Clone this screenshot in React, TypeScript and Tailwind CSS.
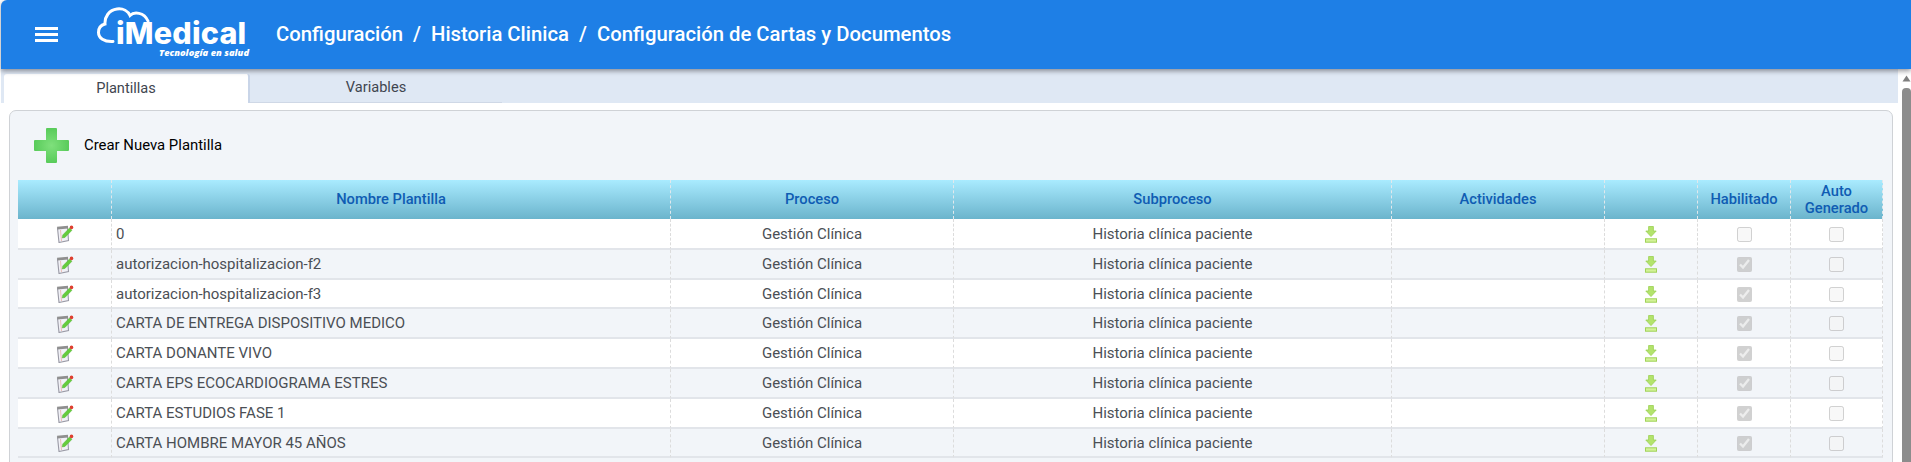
import React from "react";

const rows: [string, boolean, string][] = [
  ["0", false, "h-[31px]"],
  ["autorizacion-hospitalizacion-f2", true, "h-[30px]"],
  ["autorizacion-hospitalizacion-f3", true, "h-[29px]"],
  ["CARTA DE ENTREGA DISPOSITIVO MEDICO", true, "h-[30px]"],
  ["CARTA DONANTE VIVO", true, "h-[30px]"],
  ["CARTA EPS ECOCARDIOGRAMA ESTRES", true, "h-[30px]"],
  ["CARTA ESTUDIOS FASE 1", true, "h-[30px]"],
  ["CARTA HOMBRE MAYOR 45 AÑOS", true, "h-[29px]"],
];

function EditIcon() {
  return (
    <svg width="18" height="18" viewBox="0 0 18 18" className="block">
      <path d="M1.5 3 L11.5 2 L12.5 15.5 L3 17.5 Z" fill="#f1f1f7" stroke="#9a9aa6" strokeWidth="1.1" />
      <path d="M1 1.8 L12 0.8 L12 3.6 L1.5 4.6 Z" fill="#8f8f8f" />
      <path d="M4.5 5 L5.5 16" stroke="#e8b0a6" strokeWidth="0.8" />
      <path d="M6.2 13 L6.7 10 L13.5 3 L16 5.3 L9 12.4 Z" fill="#66cc3c" stroke="#4aa82a" strokeWidth="0.4" />
      <circle cx="15.5" cy="2.4" r="1.8" fill="#de3f30" />
    </svg>
  );
}

function DownloadIcon() {
  return (
    <svg width="12" height="17" viewBox="0 0 12 17" className="block">
      <path d="M3.6 0.5 H8.4 V5 H11.2 L6 10.6 L0.8 5 H3.6 Z" fill="#b3e36c" stroke="#9ad052" strokeWidth="0.8" />
      <rect x="0.5" y="12.8" width="11" height="3.4" fill="#d3f298" stroke="#a0d258" strokeWidth="1" />
    </svg>
  );
}

function PlusIcon() {
  return (
    <svg width="37" height="37" viewBox="0 0 37 37" className="block" style={{ filter: "blur(0.7px)" }}>
      <defs>
        <radialGradient id="plusGrad" cx="50%" cy="50%" r="55%">
          <stop offset="0%" stopColor="#7fe07c" />
          <stop offset="100%" stopColor="#55c957" />
        </radialGradient>
      </defs>
      <path
        d="M13 2 Q13 1 14 1 H23 Q24 1 24 2 V13 H35 Q36 13 36 14 V23 Q36 24 35 24 H24 V35 Q24 36 23 36 H14 Q13 36 13 35 V24 H2 Q1 24 1 23 V14 Q1 13 2 13 H13 Z"
        fill="url(#plusGrad)"
      />
    </svg>
  );
}

function Logo() {
  return (
    <div className="relative w-[152px] h-[52px] ml-[38px] mt-[7px] shrink-0 text-white">
      <svg width="60" height="42" viewBox="0 0 60 42" className="absolute left-0 top-0">
        <path
          d="M17 34.5 C8 35 2.5 31 2.5 25.5 C2.5 21 5 18 9 17 C8.5 10 13 3 21 2 C27 1.2 32 4 34 8.5 C38 4.5 48 5 52 14"
          fill="none"
          stroke="#fff"
          strokeWidth="3"
          strokeLinecap="round"
        />
      </svg>
      <div className="absolute left-[20px] top-[12px] font-['Inter',sans-serif] font-extrabold text-[30.5px] leading-[28px] tracking-[0.2px] whitespace-nowrap">
        iMedical
      </div>
      <div className="absolute left-[63px] top-[41px] font-['Open_Sans',sans-serif] font-extrabold italic text-[9.3px] leading-[10px] whitespace-nowrap">
        Tecnología en salud
      </div>
    </div>
  );
}

function Th({ children }: { children?: React.ReactNode }) {
  return (
    <th className="p-0 text-center align-middle font-medium text-[14.7px] leading-[17px] text-[#0f5cb3] border-r border-r-[#e2e8ec] [border-right-style:dashed]">
      {children}
    </th>
  );
}

const cell = "p-0 pt-[1px] border-r border-r-[#dcdcdc] [border-right-style:dashed] border-b-2 border-b-[#e2e5ea] align-middle";

export default function App() {
  return (
    <div className="h-[462px] w-[1911px] overflow-hidden bg-white font-['Roboto',sans-serif] flex flex-col">
      <header className="relative z-10 h-[69px] shrink-0 ml-px bg-[#1e7fe6] rounded-tl-md flex items-start shadow-[0_2px_5px_rgba(60,60,70,0.55)]">
        <button className="ml-[34px] mt-[27px] w-[23px] flex flex-col gap-[3.5px] shrink-0">
          <span className="block h-[2.5px] bg-white" />
          <span className="block h-[2.5px] bg-white" />
          <span className="block h-[2.5px] bg-white" />
        </button>
        <Logo />
        <div className="ml-[28px] mt-[21px] text-white font-medium text-[20.3px] leading-[26px] whitespace-nowrap">
          Configuración&nbsp; / &nbsp;Historia Clinica&nbsp; / &nbsp;Configuración de Cartas y Documentos
        </div>
      </header>

      <div className="flex flex-1 min-h-0">
        <main className="w-[1898px] shrink-0 pl-[1px]">
          <div className="h-[34px] bg-[#dfe8f4] pl-[3px] flex items-end text-[14.6px] text-[#3f4650]">
            <div className="w-[246px] h-[29px] bg-white rounded-t-[3px] flex items-center justify-center border-r-2 border-r-[#c9d5e8]">
              Plantillas
            </div>
            <div className="w-[252px] h-[29px] flex items-center justify-center border-b border-b-[#cfd8e6]">
              Variables
            </div>
          </div>

          <section className="mt-[7px] ml-[8px] w-[1884px] h-[400px] rounded-t-[7px] border border-[#cfd2d6] bg-[#f2f5f9] pl-[8px] pr-[9px]">
            <div className="h-[69px] flex items-center pl-[15px]">
              <PlusIcon />
              <span className="ml-[14px] pb-[1px] text-[14.9px] text-black">Crear Nueva Plantilla</span>
            </div>
            <table className="table-fixed border-separate border-spacing-0 w-[1865px] text-[15px] text-[#4b4f55]">
              <colgroup>
                <col className="w-[94px]" />
                <col className="w-[559px]" />
                <col className="w-[283px]" />
                <col className="w-[438px]" />
                <col className="w-[213px]" />
                <col className="w-[93px]" />
                <col className="w-[93px]" />
                <col className="w-[92px]" />
              </colgroup>
              <thead>
                <tr className="h-[39px] bg-gradient-to-b from-[#a9ebff] to-[#6bb4cc]">
                  <Th />
                  <Th>Nombre Plantilla</Th>
                  <Th>Proceso</Th>
                  <Th>Subproceso</Th>
                  <Th>Actividades</Th>
                  <Th />
                  <Th>Habilitado</Th>
                  <Th>
                    Auto
                    <br />
                    Generado
                  </Th>
                </tr>
              </thead>
              <tbody>
                {rows.map(([name, on, height], i) => (
                  <tr key={name} className={`${height} ${i % 2 ? "bg-[#f2f5f9]" : "bg-white"}`}>
                    <td className={cell}>
                      <div className="flex justify-center">
                        <EditIcon />
                      </div>
                    </td>
                    <td className={`${cell} pl-[4px]`}>{name}</td>
                    <td className={`${cell} text-center`}>Gestión Clínica</td>
                    <td className={`${cell} text-center`}>Historia clínica paciente</td>
                    <td className={cell} />
                    <td className={cell}>
                      <div className="flex justify-center">
                        <DownloadIcon />
                      </div>
                    </td>
                    <td className={cell}>
                      <div className="flex justify-center">
                        <input type="checkbox" disabled checked={on} readOnly className="w-[15px] h-[15px] m-0" />
                      </div>
                    </td>
                    <td className={cell}>
                      <div className="flex justify-center">
                        <input type="checkbox" disabled readOnly className="w-[15px] h-[15px] m-0" />
                      </div>
                    </td>
                  </tr>
                ))}
              </tbody>
            </table>
          </section>
        </main>

        <aside className="w-[13px] shrink-0 flex flex-col items-center pl-[3px] pt-[6px] bg-white">
          <svg width="9" height="7" viewBox="0 0 9 7" className="block">
            <path d="M4.5 0.5 L8.5 6.5 H0.5 Z" fill="#7f7f7f" />
          </svg>
          <div className="mt-[6px] w-[9px] flex-1 rounded-t-[4px] bg-[#8c8c8c]" />
        </aside>
      </div>
    </div>
  );
}
